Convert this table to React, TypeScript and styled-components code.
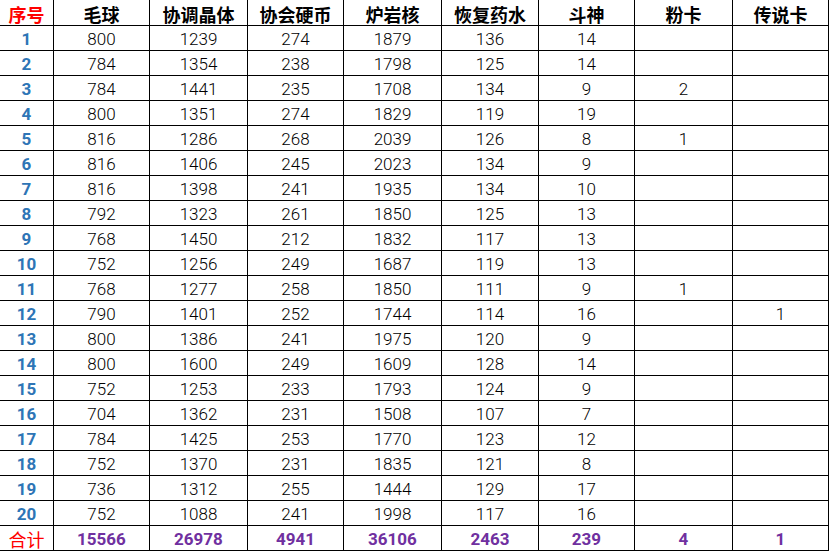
import React from "react";
import styled, { createGlobalStyle } from "styled-components";

const Global = createGlobalStyle`
  html, body { margin: 0; padding: 0; background: #ffffff; }
  body { font-family: "Roboto", "Liberation Sans", "Noto Sans CJK SC", sans-serif; }
`;

const Grid = styled.div`
  display: grid;
  grid-template-columns: 54px 96px 98px 96px 98px 97px 96px 98px 96px;
  grid-template-rows: 26px repeat(21, 25px);
  width: 829px;
`;

const Cell = styled.div<{ $kind?: "head" | "index" | "total" | "sum" | "data" }>`
  box-sizing: border-box;
  border-right: 1px solid #000;
  border-bottom: 1px solid #000;
  display: flex;
  align-items: flex-end;
  justify-content: center;
  padding-bottom: 1px;
  white-space: nowrap;
  line-height: 20px;
  font-family: ${(p) =>
    p.$kind === "head" || p.$kind === "total"
      ? '"Noto Sans CJK SC", "Liberation Sans", sans-serif'
      : '"Roboto", "Liberation Sans", sans-serif'};
  font-size: ${(p) => (p.$kind === "head" || p.$kind === "total" ? "18px" : "17px")};
  font-weight: ${(p) => (p.$kind === "data" ? 300 : p.$kind === "total" ? 400 : 700)};
  color: ${(p) =>
    p.$kind === "index"
      ? "#2e75b6"
      : p.$kind === "total"
      ? "#ff0000"
      : p.$kind === "sum"
      ? "#7030a0"
      : "#000000"};
`;

const HeadRed = styled.span`
  color: #ff0000;
`;

const headers = ["毛球", "协调晶体", "协会硬币", "炉岩核", "恢复药水", "斗神", "粉卡", "传说卡"];

const rows: (number | null)[][] = [
  [800, 1239, 274, 1879, 136, 14, null, null],
  [784, 1354, 238, 1798, 125, 14, null, null],
  [784, 1441, 235, 1708, 134, 9, 2, null],
  [800, 1351, 274, 1829, 119, 19, null, null],
  [816, 1286, 268, 2039, 126, 8, 1, null],
  [816, 1406, 245, 2023, 134, 9, null, null],
  [816, 1398, 241, 1935, 134, 10, null, null],
  [792, 1323, 261, 1850, 125, 13, null, null],
  [768, 1450, 212, 1832, 117, 13, null, null],
  [752, 1256, 249, 1687, 119, 13, null, null],
  [768, 1277, 258, 1850, 111, 9, 1, null],
  [790, 1401, 252, 1744, 114, 16, null, 1],
  [800, 1386, 241, 1975, 120, 9, null, null],
  [800, 1600, 249, 1609, 128, 14, null, null],
  [752, 1253, 233, 1793, 124, 9, null, null],
  [704, 1362, 231, 1508, 107, 7, null, null],
  [784, 1425, 253, 1770, 123, 12, null, null],
  [752, 1370, 231, 1835, 121, 8, null, null],
  [736, 1312, 255, 1444, 129, 17, null, null],
  [752, 1088, 241, 1998, 117, 16, null, null],
];

const totals = [15566, 26978, 4941, 36106, 2463, 239, 4, 1];

export default function App() {
  return (
    <>
      <Global />
      <Grid>
        <Cell $kind="head">
          <HeadRed>序号</HeadRed>
        </Cell>
        {headers.map((h) => (
          <Cell key={h} $kind="head">
            {h}
          </Cell>
        ))}
        {rows.map((r, i) => (
          <React.Fragment key={i}>
            <Cell $kind="index">{i + 1}</Cell>
            {r.map((v, j) => (
              <Cell key={j} $kind="data">
                {v ?? ""}
              </Cell>
            ))}
          </React.Fragment>
        ))}
        <Cell $kind="total">合计</Cell>
        {totals.map((t, j) => (
          <Cell key={j} $kind="sum">
            {t}
          </Cell>
        ))}
      </Grid>
    </>
  );
}
